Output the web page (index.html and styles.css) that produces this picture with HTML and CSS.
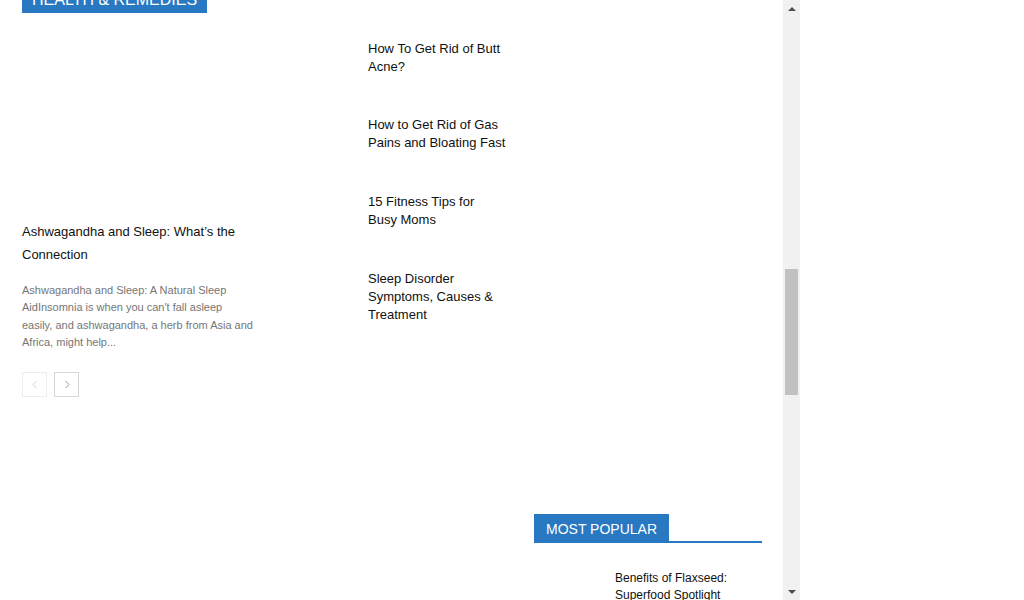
FILE: index.html
```html
<!DOCTYPE html>
<html lang="en">
<head>
<meta charset="utf-8">
<title>Health &amp; Remedies</title>
<link rel="stylesheet" href="styles.css">
</head>
<body>
<div class="frame">
  <div class="viewport">
    <div class="page">
      <div class="main">
        <div class="block-head"><span class="block-title">Health &amp; Remedies</span></div>
        <div class="cols">
          <div class="lead">
            <div class="lead-thumb"></div>
            <h3 class="lead-title">Ashwagandha and Sleep: What’s the Connection</h3>
            <p class="excerpt">Ashwagandha and Sleep: A Natural Sleep AidInsomnia is when you can't fall asleep easily, and ashwagandha, a herb from Asia and Africa, might help...</p>
            <div class="pager">
              <span class="pg pg-off"><svg width="8" height="9" viewBox="0 0 8 9"><polyline points="5.5,1 2,4.5 5.5,8" fill="none" stroke="currentColor" stroke-width="1"/></svg></span>
              <span class="pg"><svg width="8" height="9" viewBox="0 0 8 9"><polyline points="2.5,1 6,4.5 2.5,8" fill="none" stroke="currentColor" stroke-width="1"/></svg></span>
            </div>
          </div>
          <ul class="list">
            <li class="item"><div class="thumb"></div><h3 class="item-title">How To Get Rid of Butt Acne?</h3></li>
            <li class="item"><div class="thumb"></div><h3 class="item-title">How to Get Rid of Gas Pains and Bloating Fast</h3></li>
            <li class="item"><div class="thumb"></div><h3 class="item-title">15 Fitness Tips for Busy Moms</h3></li>
            <li class="item"><div class="thumb"></div><h3 class="item-title">Sleep Disorder Symptoms, Causes &amp; Treatment</h3></li>
          </ul>
        </div>
      </div>
      <aside class="side">
        <div class="side-spacer"></div>
        <div class="side-head"><span class="block-title side-title">Most Popular</span></div>
        <div class="pop-item"><div class="pop-thumb"></div><h3 class="pop-title">Benefits of Flaxseed: Superfood Spotlight</h3></div>
      </aside>
    </div>
  </div>
  <div class="scrollbar">
    <div class="sb-btn"><span class="tri-up"></span></div>
    <div class="sb-track"><div class="sb-thumb"></div></div>
    <div class="sb-btn"><span class="tri-down"></span></div>
  </div>
</div>
</body>
</html>
```

FILE: styles.css
```css
html, body {
  margin: 0;
  padding: 0;
  background: #fff;
}
body {
  font-family: "Liberation Sans", Arial, sans-serif;
  color: #111;
}
.frame {
  display: flex;
  width: 800px;
  height: 600px;
  overflow: hidden;
}
.viewport {
  flex: 1;
  overflow: hidden;
}
.page {
  display: flex;
  align-items: flex-start;
  padding-left: 22px;
  gap: 28px;
}
.main {
  width: 484px;
  flex: none;
}
.block-head {
  display: flex;
  margin-top: -16px;
}
.block-title {
  background: #2878c2;
  color: #fff;
  font-size: 16px;
  text-transform: uppercase;
  padding: 2px 10px 0;
  line-height: 27px;
}
.cols {
  display: grid;
  grid-template-columns: 232px 1fr;
  column-gap: 24px;
}
.lead-thumb {
  height: 206.5px;
}
.lead-title {
  margin: 0;
  font-size: 13px;
  font-weight: normal;
  line-height: 23px;
  color: #111;
}
.excerpt {
  margin: 16px 0 0;
  font-size: 11px;
  line-height: 17.6px;
  color: #767676;
}
.pager {
  display: flex;
  gap: 7px;
  margin-top: 20px;
}
.pg {
  width: 23px;
  height: 23px;
  border: 1px solid #d6d6d6;
  display: flex;
  align-items: center;
  justify-content: center;
  color: #9a9a9a;
}
.pg-off {
  border-color: #ececec;
  color: #d2d2d2;
}
.list {
  list-style: none;
  margin: 0;
  padding: 26.5px 0 0;
}
.item {
  display: flex;
  height: 76.7px;
}
.thumb {
  width: 80px;
  flex: none;
  margin-right: 10px;
}
.item-title {
  margin: 0;
  width: 138px;
  font-size: 13px;
  font-weight: normal;
  line-height: 18px;
  color: #111;
}
.side {
  width: 228px;
  flex: none;
}
.side-spacer {
  height: 514px;
}
.side-head {
  display: flex;
  border-bottom: 2px solid #2878c2;
}
.side-title {
  font-size: 14px;
  padding: 2px 12px 0;
  margin-bottom: -2px;
}
.pop-item {
  display: flex;
  margin-top: 27px;
}
.pop-thumb {
  width: 71px;
  flex: none;
  margin-right: 10px;
}
.pop-title {
  margin: 0;
  font-size: 12px;
  font-weight: normal;
  line-height: 17px;
  color: #111;
}
.scrollbar {
  width: 17px;
  flex: none;
  background: #f1f1f1;
  display: flex;
  flex-direction: column;
}
.sb-btn {
  height: 17px;
  display: flex;
  align-items: center;
  justify-content: center;
}
.tri-up {
  width: 0;
  height: 0;
  border-left: 4px solid transparent;
  border-right: 4px solid transparent;
  border-bottom: 4px solid #505050;
}
.tri-down {
  width: 0;
  height: 0;
  border-left: 4px solid transparent;
  border-right: 4px solid transparent;
  border-top: 4px solid #505050;
}
.sb-track {
  flex: 1;
  padding: 252px 2px 0;
}
.sb-thumb {
  height: 126px;
  background: #c1c1c1;
}
```
